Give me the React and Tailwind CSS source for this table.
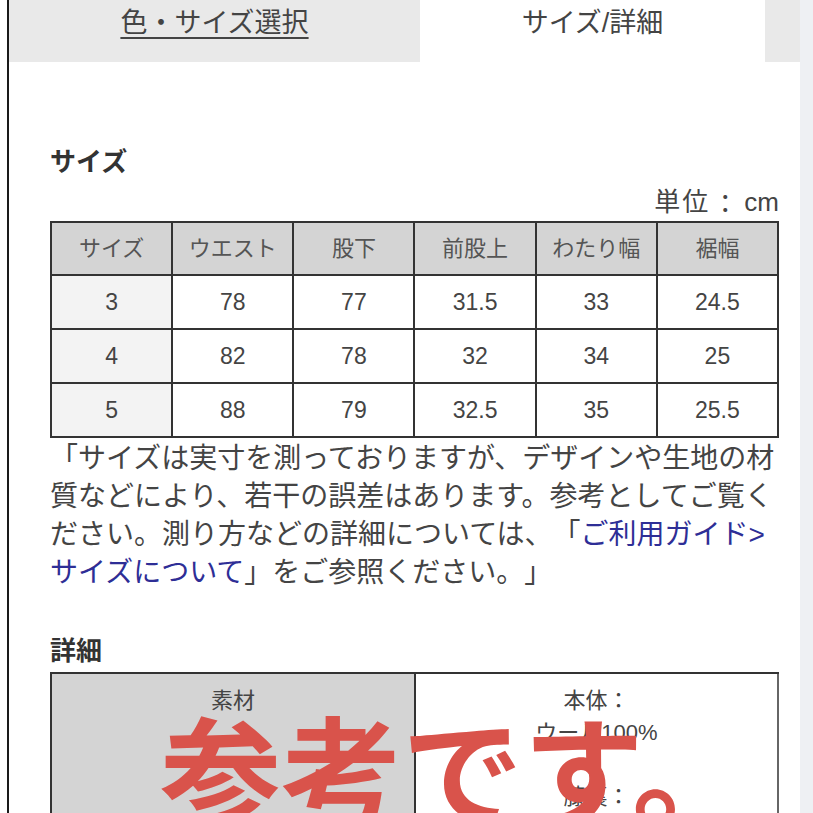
import React from "react";

const F = { fontFamily: '"Liberation Sans", "Noto Sans CJK JP", sans-serif' };
const J = { fontFamily: '"Noto Sans CJK JP", sans-serif' };

const header = ["サイズ", "ウエスト", "股下", "前股上", "わたり幅", "裾幅"];
const rows = [
  ["3", "78", "77", "31.5", "33", "24.5"],
  ["4", "82", "78", "32", "34", "25"],
  ["5", "88", "79", "32.5", "35", "25.5"],
];

export default function App() {
  return (
    <div
      className="relative flex h-[813px] w-[813px] overflow-hidden bg-white text-[#444] [text-spacing-trim:space-all]"
      style={F}
    >
      <div className="w-[7px] shrink-0 bg-white" />
      <div className="flex w-[793px] shrink-0 flex-col border-l-2 border-[#1a1a1a]">
        {/* tabs */}
        <div className="flex h-[62px] shrink-0">
          <div className="flex w-[411px] justify-center bg-[#e9e9e9] pt-[5px]">
            <span className="text-[27px] leading-[36px] text-[#444] underline decoration-2 underline-offset-[5px]">
              色・サイズ選択
            </span>
          </div>
          <div className="flex w-[345px] justify-center bg-white pt-[5px]">
            <span className="text-[27px] leading-[36px] text-[#444]">サイズ/詳細</span>
          </div>
          <div className="w-[35px] bg-[#e9e9e9]" />
        </div>

        {/* content */}
        <div className="flex shrink-0 flex-col pl-[41px] pr-[21px]">
          <div className="mt-[82px] text-[26px] font-bold leading-[36px] text-[#333]">サイズ</div>
          <div className="mt-[4px] flex h-[36px] items-center justify-end text-[26px] leading-none text-[#444]">
            <span className="tracking-[2px]">単位</span>
            <span style={J} className="ml-[2px]">：</span>
            <span className="ml-[6px]">cm</span>
          </div>

          <div className="mt-[1px] grid grid-cols-6 border-l-2 border-t-2 border-[#333]">
            {header.map((h) => (
              <div
                key={h}
                className="flex h-[53px] items-center justify-center border-b-2 border-r-2 border-[#333] bg-[#d4d4d4] text-[22px] text-[#555]"
              >
                {h}
              </div>
            ))}
            {rows.map((r) =>
              r.map((c, i) => (
                <div
                  key={r[0] + "-" + i}
                  className={
                    "flex h-[54px] items-center justify-center border-b-2 border-r-2 border-[#333] text-[23px] text-[#444] " +
                    (i === 0 ? "bg-[#f3f3f3]" : "bg-white")
                  }
                >
                  {c}
                </div>
              ))
            )}
          </div>

          <p className="mt-[2px] text-[28px] leading-[38px] text-[#444]">
            「サイズは実寸を測っておりますが、デザインや生地の材質などにより、若干の誤差はあります。参考としてご覧ください。測り方などの詳細については、「
            <span className="text-[#2e2e96]">ご利用ガイド&gt;サイズについて</span>
            」をご参照ください。」
          </p>

          <div className="mt-[41px] text-[26px] font-bold leading-[36px] text-[#333]">詳細</div>

          <div className="mt-[3px] flex h-[200px] shrink-0 border-l-2 border-t-2 border-[#333]">
            <div className="flex w-[364px] justify-center border-r-2 border-[#333] bg-[#d4d4d4] pt-[11px]">
              <span className="text-[22px] leading-[32px] text-[#444]">素材</span>
            </div>
            <div className="flex flex-1 flex-col items-center border-r-2 border-[#666] bg-white pt-[11px] text-[22px] leading-[32px] text-[#444]">
              <span>本体：</span>
              <span>ウール100%</span>
              <span>&nbsp;</span>
              <span>膝裏：</span>
            </div>
          </div>
        </div>
      </div>
      <div className="w-[13px] shrink-0 bg-[#eef0f3]" />

      {/* overlay stamp */}
      <div
        className="absolute left-[160px] top-[706px] whitespace-nowrap text-[121px] font-bold leading-none text-[#d9534b]"
        style={J}
      >
        参考です。
      </div>
    </div>
  );
}
